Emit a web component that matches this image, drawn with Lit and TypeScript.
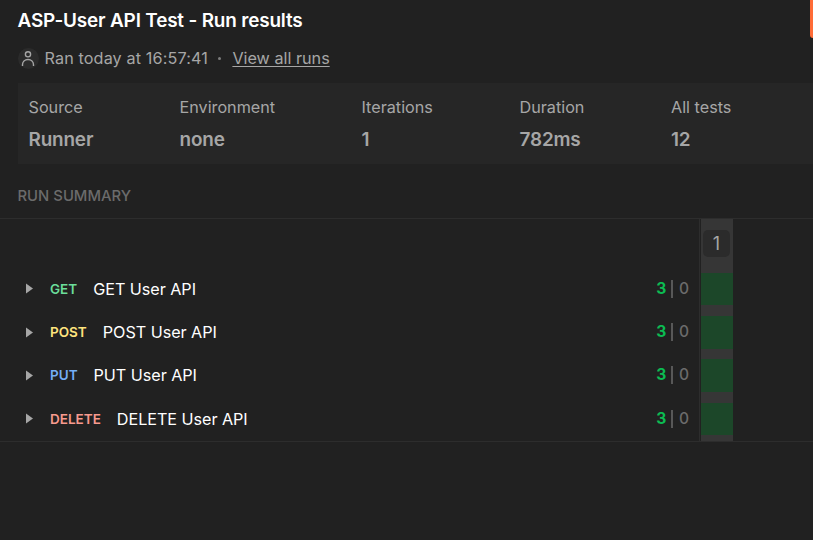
import { LitElement, html, css, svg } from "lit";
import { customElement } from "lit/decorators.js";

const STATS = [
  { label: "Source", value: "Runner" },
  { label: "Environment", value: "none" },
  { label: "Iterations", value: "1" },
  { label: "Duration", value: "782ms" },
  { label: "All tests", value: "12" },
];

const REQUESTS = [
  { method: "GET", name: "GET User API", passed: 3, failed: 0 },
  { method: "POST", name: "POST User API", passed: 3, failed: 0 },
  { method: "PUT", name: "PUT User API", passed: 3, failed: 0 },
  { method: "DELETE", name: "DELETE User API", passed: 3, failed: 0 },
];

const userIcon = svg`<circle cx="10" cy="6.3" r="2.6"/><path d="M4.5 18v-1.2c0-3.2 2.3-5.3 5.5-5.3s5.5 2.1 5.5 5.3V18"/>`;

@customElement("app-root")
export class AppRoot extends LitElement {
  static styles = css`
    :host {
      display: block;
      position: relative;
      box-sizing: border-box;
      height: 540px;
      overflow: hidden;
      background: #212121;
      color: #a6a6a6;
      font: 16.2px/22px Inter, "Liberation Sans", sans-serif;
      white-space: nowrap;
    }
    .accent {
      position: absolute;
      top: 0;
      right: 0;
      width: 3px;
      height: 38px;
      background: #ff6c37;
      border-radius: 0 0 0 3px;
    }
    h1 {
      margin: 0;
      padding: 7px 0 0 17.5px;
      font-size: 18.9px;
      line-height: 27px;
      font-weight: 600;
      letter-spacing: -0.16px;
      color: #fff;
    }
    .meta {
      display: flex;
      align-items: center;
      height: 22px;
      margin: 13px 0 0 18px;
    }
    .avatar {
      width: 21px;
      height: 21px;
      margin-right: 5.5px;
      border-radius: 50%;
      background: #2b2b2b;
      fill: none;
      stroke: #a6a6a6;
      stroke-width: 1.4;
    }
    .time {
      letter-spacing: 0.12px;
    }
    .dot {
      width: 3px;
      height: 3px;
      border-radius: 50%;
      background: #7d7d7d;
      margin: 0 11px 0 10.5px;
    }
    .link {
      text-decoration: underline;
      text-underline-offset: 2px;
      text-decoration-thickness: 1px;
    }
    .stats {
      display: grid;
      grid-template-columns: 151px 182px 158px 151.5px 1fr;
      box-sizing: border-box;
      height: 81px;
      margin: 14px 0 0 18px;
      padding: 13px 0 0 10.5px;
      background: #262626;
    }
    .value {
      margin-top: 9px;
      font-size: 18.9px;
      line-height: 26px;
      font-weight: 600;
      letter-spacing: -0.16px;
    }
    .section {
      height: 54px;
      box-sizing: border-box;
      padding: 21px 0 0 17.5px;
      font-size: 14.85px;
      font-weight: 500;
      color: #6b6b6b;
    }
    .summary {
      display: grid;
      grid-template-columns: 699px 34px 1fr;
      height: 222px;
      border-top: 1px solid #2d2d2d;
      border-bottom: 1px solid #2d2d2d;
    }
    .list {
      padding-top: 48.4px;
    }
    .row {
      display: flex;
      align-items: center;
      height: 43.2px;
      padding: 0 10px 0 25px;
    }
    .caret {
      width: 8px;
      height: 11px;
      fill: #a6a6a6;
      margin-right: 17px;
    }
    .method {
      font-size: 13.5px;
      font-weight: 600;
      margin-right: 16px;
    }
    .get { color: #6bdd9a; }
    .post { color: #ffe47e; }
    .put { color: #74aef6; }
    .delete { color: #f79a8e; }
    .name {
      flex: 1;
      color: #fff;
      letter-spacing: -0.05px;
    }
    .counts {
      display: flex;
      align-items: center;
      font-size: 15.6px;
      font-weight: 500;
      color: #6b6b6b;
    }
    .passed {
      color: #0cbb52;
      font-weight: 700;
    }
    .bar {
      width: 2px;
      height: 18px;
      background: #585858;
      margin: 0 5.5px 0 5px;
    }
    .iteration {
      display: flex;
      flex-direction: column;
      border-left: 1px solid #2d2d2d;
      padding-left: 1px;
    }
    .track {
      flex: 1;
      background: #363636;
    }
    .number {
      width: 27px;
      height: 27px;
      margin: 11px 0 15.7px 2px;
      border-radius: 5px;
      background: #2b2b2b;
      text-align: center;
      line-height: 28px;
      font-size: 18px;
    }
    .cell {
      height: 32.7px;
      background: #1c4729;
    }
    .cell + .cell {
      margin-top: 10.6px;
    }
  `;

  render() {
    return html`
      <h1><span>ASP-User API Test - Run results</span></h1>
      <div class="meta">
        <svg class="avatar" viewBox="0 0 21 21">${userIcon}</svg>
        <span class="time">Ran today at 16:57:41</span>
        <i class="dot"></i>
        <span class="link">View all runs</span>
      </div>
      <div class="stats">
        ${STATS.map((s) => html`<div><div>${s.label}</div><div class="value">${s.value}</div></div>`)}
      </div>
      <div class="section">RUN SUMMARY</div>
      <div class="summary">
        <div class="list">
          ${REQUESTS.map(
            (r) => html`<div class="row">
              <svg class="caret" viewBox="0 0 8 11"><path d="M1 0.5L8 5.5L1 10.5Z" /></svg>
              <span class="method ${r.method.toLowerCase()}">${r.method}</span>
              <span class="name">${r.name}</span>
              <div class="counts">
                <span class="passed">${r.passed}</span>
                <i class="bar"></i>
                <span>${r.failed}</span>
              </div>
            </div>`
          )}
        </div>
        <div class="iteration">
          <div class="track">
            <div class="number">1</div>
            ${REQUESTS.map(() => html`<div class="cell"></div>`)}
          </div>
        </div>
      </div>
      <div class="accent"></div>
    `;
  }
}
